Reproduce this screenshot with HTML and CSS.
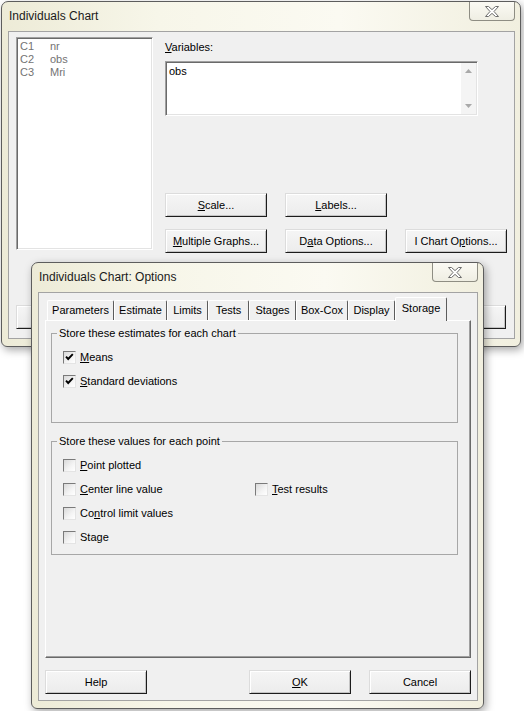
FILE: index.html
```html
<!DOCTYPE html>
<html lang="en">
<head>
<meta charset="utf-8">
<title>Individuals Chart</title>
<link rel="stylesheet" href="styles.css">
</head>
<body>
<div class="win win-main">
  <div class="titlebar">
    <span class="title">Individuals Chart</span>
    <span class="close"><svg width="14" height="11" viewBox="0 0 14 11"><polygon points="0.5,0.5 3.5,0.5 7,3.6 10.5,0.5 13.5,0.5 9,5.5 13.5,10.5 10.5,10.5 7,7.4 3.5,10.5 0.5,10.5 5,5.5" fill="#fff" stroke="#6e6e6e" stroke-width="1"/></svg></span>
  </div>
  <div class="client">
    <div class="main-top">
      <div class="listbox">
        <div class="lrow"><span class="lc">C1</span><span>nr</span></div>
        <div class="lrow"><span class="lc">C2</span><span>obs</span></div>
        <div class="lrow"><span class="lc">C3</span><span>Mri</span></div>
      </div>
      <div class="rightcol">
        <div class="lbl"><u>V</u>ariables:</div>
        <div class="textbox">
          <div class="tb-text">obs</div>
          <div class="vscroll">
            <span class="arrow"><svg width="7" height="4" viewBox="0 0 7 4"><polygon points="0,4 3.5,0 7,4" fill="#a9a9a9"/></svg></span>
            <span class="arrow"><svg width="7" height="4" viewBox="0 0 7 4"><polygon points="0,0 3.5,4 7,0" fill="#a9a9a9"/></svg></span>
          </div>
        </div>
        <div class="btngrid">
          <button class="btn"><span><u>S</u>cale...</span></button>
          <button class="btn"><span><u>L</u>abels...</span></button>
          <span></span>
          <button class="btn"><span><u>M</u>ultiple Graphs...</span></button>
          <button class="btn"><span>D<u>a</u>ta Options...</span></button>
          <button class="btn"><span>I Chart O<u>p</u>tions...</span></button>
        </div>
      </div>
    </div>
    <div class="bottom-row main-bottom">
      <button class="btn" aria-label="Help"></button>
      <button class="btn push" aria-label="OK"></button>
      <button class="btn" aria-label="Cancel"></button>
    </div>
  </div>
</div>

<div class="win win-opt">
  <div class="titlebar">
    <span class="title">Individuals Chart: Options</span>
    <span class="close"><svg width="14" height="11" viewBox="0 0 14 11"><polygon points="0.5,0.5 3.5,0.5 7,3.6 10.5,0.5 13.5,0.5 9,5.5 13.5,10.5 10.5,10.5 7,7.4 3.5,10.5 0.5,10.5 5,5.5" fill="#fff" stroke="#6e6e6e" stroke-width="1"/></svg></span>
  </div>
  <div class="client">
    <div class="tabs">
      <div class="tab w67">Parameters</div>
      <div class="tab w53">Estimate</div>
      <div class="tab w41">Limits</div>
      <div class="tab w41">Tests</div>
      <div class="tab w47">Stages</div>
      <div class="tab w52">Box-Cox</div>
      <div class="tab w47">Display</div>
      <div class="tab sel w52">Storage</div>
    </div>
    <div class="panel">
      <fieldset class="group">
        <legend>Store these estimates for each chart</legend>
        <div class="rows rows-est">
          <div class="chk"><span class="box"><svg width="11" height="11" viewBox="0 0 11 11"><path d="M2 4.6 L4.2 7 L8.8 2.2" fill="none" stroke="#000" stroke-width="1.9"/></svg></span><span><u>M</u>eans</span></div>
          <div class="chk"><span class="box"><svg width="11" height="11" viewBox="0 0 11 11"><path d="M2 4.6 L4.2 7 L8.8 2.2" fill="none" stroke="#000" stroke-width="1.9"/></svg></span><span><u>S</u>tandard deviations</span></div>
        </div>
      </fieldset>
      <fieldset class="group group-pt">
        <legend>Store these values for each point</legend>
        <div class="rows rows-pt">
          <div class="chk"><span class="box"></span><span><u>P</u>oint plotted</span></div>
          <span></span>
          <div class="chk"><span class="box"></span><span><u>C</u>enter line value</span></div>
          <div class="chk"><span class="box"></span><span><u>T</u>est results</span></div>
          <div class="chk"><span class="box"></span><span>Co<u>n</u>trol limit values</span></div>
          <span></span>
          <div class="chk"><span class="box"></span><span>Sta<u>g</u>e</span></div>
        </div>
      </fieldset>
    </div>
    <div class="bottom-row opt-bottom">
      <button class="btn">Help</button>
      <button class="btn push"><span><u>O</u>K</span></button>
      <button class="btn">Cancel</button>
    </div>
  </div>
</div>
</body>
</html>
```

FILE: styles.css
```css
* { box-sizing: border-box; }
html, body { margin: 0; padding: 0; }
body {
  width: 524px;
  height: 711px;
  position: relative;
  overflow: hidden;
  background: #fff;
  font-family: "Liberation Sans", Arial, sans-serif;
  font-size: 11px;
  line-height: 13px;
  color: #000;
}
u { text-underline-offset: 1px; }

/* windows on the desktop */
.win {
  position: absolute;
  display: flex;
  flex-direction: column;
  border: 1px solid #5d5d5d;
  border-radius: 7px 7px 6px 6px;
  background: linear-gradient(90deg, #edebd7 0%, #f7f6e9 30%, #fbfaf2 65%, #f1efdf 100%);
  box-shadow: 2px 3px 8px rgba(0, 0, 0, 0.35);
}
.win-main { left: 1px; top: 1px; width: 520px; height: 346px; }
.win-opt { left: 31px; top: 262px; width: 453px; height: 447px; }

.titlebar {
  flex: none;
  height: 29px;
  display: flex;
  align-items: flex-start;
  justify-content: space-between;
  padding-left: 7px;
}
.title {
  font-size: 12px;
  line-height: 29px;
  color: #1a1a1a;
}
.close {
  width: 46px;
  height: 19px;
  margin-right: 5px;
  border: 1px solid #8e8d83;
  border-top: 0;
  border-radius: 0 0 4px 4px;
  background: linear-gradient(#fbfaf4, #efeee3);
  display: flex;
  align-items: center;
  justify-content: center;
}
.close svg { display: block; }

.client {
  flex: 1;
  margin: 0 5px 7px 6px;
  border: 1px solid #a3a3a3;
  background: #f0f0f0;
  display: flex;
  flex-direction: column;
}

/* main dialog */
.main-top {
  display: flex;
  margin: 5px 0 0 7px;
  height: 216px;
}
.listbox {
  flex: none;
  width: 137px;
  height: 213px;
  background: #fff;
  border: 1px solid;
  border-color: #a0a0a0 #fff #fff #a0a0a0;
  box-shadow: inset 1px 1px 0 #6a6a6a, inset -1px -1px 0 #e3e3e3;
  padding: 2px 0 0 3px;
  color: #737373;
}
.lrow { display: flex; height: 13px; }
.lc { width: 30px; }

.rightcol {
  margin-left: 12px;
  display: flex;
  flex-direction: column;
}
.lbl { margin-top: 4px; }
.textbox {
  margin-top: 7px;
  width: 313px;
  height: 55px;
  display: flex;
  background: #fff;
  border: 1px solid;
  border-color: #a0a0a0 #fff #fff #a0a0a0;
  box-shadow: inset 1px 1px 0 #6a6a6a, inset -1px -1px 0 #e3e3e3;
  padding: 1px;
}
.tb-text { flex: 1; padding: 2px 0 0 2px; }
.vscroll {
  flex: none;
  width: 15px;
  background: #f4f4f4;
  display: flex;
  flex-direction: column;
  justify-content: space-between;
}
.arrow {
  height: 16px;
  display: flex;
  align-items: center;
  justify-content: center;
}
.arrow svg { display: block; }

.btngrid {
  margin-top: 77px;
  display: grid;
  grid-template-columns: repeat(3, 102px);
  grid-auto-rows: 24px;
  column-gap: 18px;
  row-gap: 12px;
}

.btn {
  width: 102px;
  height: 24px;
  padding: 0;
  margin: 0;
  font: inherit;
  line-height: 13px;
  color: #000;
  background: linear-gradient(#f5f5f5, #ececec);
  border: 1px solid;
  border-color: #dcdcdc #1c1c1c #1c1c1c #dcdcdc;
  box-shadow: inset 1px 1px 0 #fff, inset -1px -1px 0 #c4c4c4;
  display: flex;
  align-items: center;
  justify-content: center;
}

.bottom-row {
  display: flex;
  gap: 18px;
  height: 24px;
  flex: none;
}
.push { margin-left: auto; }
.main-bottom { margin: 52px 8px 0 7px; }
.opt-bottom { margin: 12px 6px 0 6px; }

/* options dialog */
.tabs {
  flex: none;
  display: flex;
  align-items: flex-end;
  height: 23px;
  margin: 4px 0 0 8px;
}
.tab {
  height: 20px;
  background: #f0f0f0;
  border-top: 1px solid #fff;
  border-left: 1px solid #fff;
  border-right: 1px solid #5c5c5c;
  border-radius: 2px 2px 0 0;
  display: flex;
  align-items: center;
  justify-content: center;
  white-space: nowrap;
}
.tab.sel {
  height: 24px;
  margin-bottom: -1px;
  padding-bottom: 3px;
  position: relative;
  z-index: 1;
}
.w41 { width: 41px; }
.w47 { width: 47px; }
.w52 { width: 52px; }
.w53 { width: 53px; }
.w67 { width: 67px; }

.panel {
  flex: none;
  height: 338px;
  margin: 0 6px;
  border: 1px solid;
  border-color: #fff #696969 #696969 #fff;
  box-shadow: inset -1px -1px 0 #a0a0a0;
  padding: 0 12px 0 5px;
  display: flex;
  flex-direction: column;
}

.group {
  margin: 6px 0 0;
  padding: 0;
  min-width: 0;
  border: 1px solid #a7a7a7;
}
.group-pt { margin-top: 12px; }
.group legend {
  margin-left: 5px;
  padding: 0 2px;
  line-height: 13px;
}
.rows { padding: 5px 0 29px 11px; }
.rows-est { display: flex; flex-direction: column; }
.rows-pt {
  padding-bottom: 5px;
  display: grid;
  grid-template-columns: 192px auto;
  grid-auto-rows: 24px;
}
.chk {
  height: 24px;
  display: flex;
  align-items: center;
  gap: 4px;
}
.box {
  flex: none;
  width: 13px;
  height: 13px;
  border: 1px solid;
  border-color: #7a7a7a #e4e4e4 #e4e4e4 #7a7a7a;
  background: linear-gradient(135deg, #d9d9d9 0%, #f4f4f4 60%, #ffffff 100%);
}
.box svg { display: block; }
```
